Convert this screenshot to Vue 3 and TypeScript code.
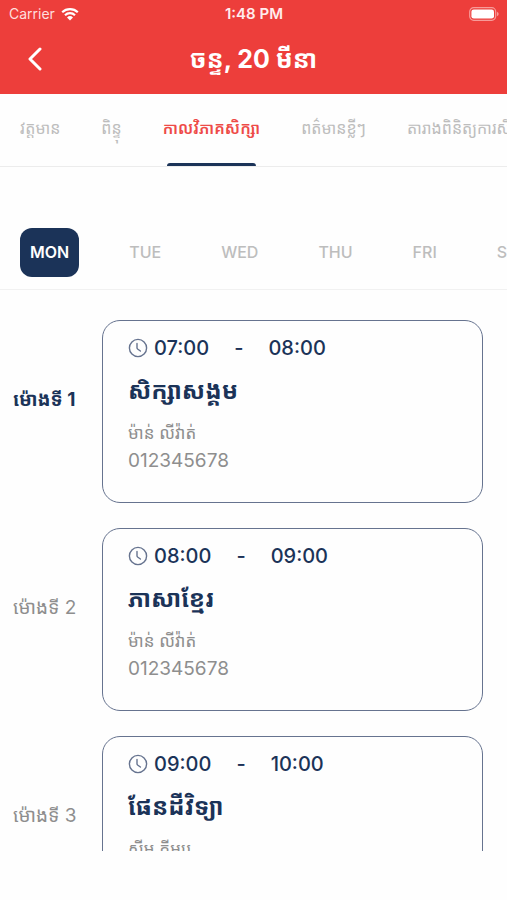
<script setup lang="ts">
import { ref } from 'vue'

interface Lesson {
  label: string
  start: string
  end: string
  subject: string
  teacher: string
  phone: string
}

const tabs: string[] = ['វត្តមាន', 'ពិន្ទុ', 'កាលវិភាគសិក្សា', 'ពត៌មានខ្លីៗ', 'តារាងពិនិត្យការសិក្សា']
const days: string[] = ['MON', 'TUE', 'WED', 'THU', 'FRI', 'SAT']
const activeTab = ref<number>(2)
const activeDay = ref<number>(0)

const lessons: Lesson[] = [
  { label: 'ម៉ោងទី 1', start: '07:00', end: '08:00', subject: 'សិក្សាសង្គម', teacher: 'ម៉ាន់ លីវ៉ាត់', phone: '012345678' },
  { label: 'ម៉ោងទី 2', start: '08:00', end: '09:00', subject: 'ភាសាខ្មែរ', teacher: 'ម៉ាន់ លីវ៉ាត់', phone: '012345678' },
  { label: 'ម៉ោងទី 3', start: '09:00', end: '10:00', subject: 'ផែនដីវិទ្យា', teacher: 'ស៊ីម គីមរេ', phone: '012345678' },
]
</script>

<template>
  <div class="screen">
    <header class="top">
      <div class="status">
        <span class="carrier">
          Carrier
          <svg class="wifi" viewBox="0 0 18 14" aria-hidden="true">
            <path d="M1.2 5.2a11.2 11.2 0 0 1 15.6 0" />
            <path d="M4 8.2a7.2 7.2 0 0 1 10 0" />
            <path class="solid" d="M9 13.4 6 10.4a4.3 4.3 0 0 1 6 0z" />
          </svg>
        </span>
        <span class="clock-text">1:48 PM</span>
        <svg class="battery" viewBox="0 0 30 14" aria-hidden="true">
          <rect class="shell" x="0.7" y="0.7" width="26" height="12.6" rx="4" />
          <rect class="charge" x="2.4" y="2.4" width="22.6" height="9.2" rx="2.4" />
          <path class="tip" d="M28 4.8q1.7.8 1.7 2.2T28 9.2z" />
        </svg>
      </div>
      <div class="title-bar">
        <button class="back" type="button" aria-label="Back">
          <svg viewBox="0 0 16 24" aria-hidden="true"><path d="M13 2 3 12l10 10" /></svg>
        </button>
        <h1>ចន្ទ, 20 មីនា</h1>
      </div>
    </header>

    <nav class="tabs">
      <button
        v-for="(tab, i) in tabs"
        :key="tab"
        type="button"
        class="tab"
        :class="{ active: i === activeTab }"
        @click="activeTab = i"
      >{{ tab }}</button>
    </nav>

    <div class="days">
      <button
        v-for="(day, i) in days"
        :key="day"
        type="button"
        class="day"
        :class="{ active: i === activeDay }"
        @click="activeDay = i"
      >{{ day }}</button>
    </div>

    <main class="lessons">
      <section v-for="(lesson, i) in lessons" :key="lesson.label" class="row">
        <div class="period" :class="{ current: i === 0 }">{{ lesson.label }}</div>
        <article class="card">
          <div class="time">
            <svg class="clock" viewBox="0 0 20 20" aria-hidden="true">
              <circle cx="10" cy="10" r="8.6" />
              <path d="M9 5.4v4.4q0 .7.6 1.2l2.8 2" />
            </svg>
            <span>{{ lesson.start }}</span>
            <span class="dash">-</span>
            <span>{{ lesson.end }}</span>
          </div>
          <h2>{{ lesson.subject }}</h2>
          <p class="teacher">{{ lesson.teacher }}</p>
          <p class="phone">{{ lesson.phone }}</p>
        </article>
      </section>
    </main>
  </div>
</template>

<style>
body {
  margin: 0;
  background: #fff;
}
</style>

<style scoped>
.screen {
  display: flex;
  flex-direction: column;
  height: 100vh;
  padding-bottom: 49px;
  box-sizing: border-box;
  overflow: hidden;
  background: #fefefe;
  color: #1b3358;
  font-family: Inter, "Noto Sans Khmer", "Khmer OS", "Noto Sans", sans-serif;
}

button {
  padding: 0;
  border: 0;
  background: none;
  font: inherit;
  color: inherit;
  white-space: nowrap;
  cursor: pointer;
}

.top {
  flex: none;
  background: #ed3e3b;
  color: #fff;
}

.status {
  display: grid;
  grid-template-columns: 1fr auto 1fr;
  align-items: center;
  height: 27px;
  padding: 0 8px 0 9px;
}

.carrier {
  display: flex;
  align-items: center;
  gap: 6px;
  font-size: 14px;
  color: #ffdedd;
}

.clock-text {
  font-size: 15px;
  font-weight: 600;
  color: #ffecec;
}

.wifi {
  width: 18px;
  height: 14px;
  fill: none;
  stroke: #fff;
  stroke-width: 2.2;
}

.wifi .solid {
  fill: #fff;
  stroke: none;
}

.battery {
  justify-self: end;
  width: 30px;
  height: 14px;
}

.shell {
  fill: none;
  stroke: #f79b99;
  stroke-width: 1.2;
}

.charge {
  fill: #fff;
}

.tip {
  fill: #f79b99;
}

.title-bar {
  display: grid;
  grid-template-columns: 44px 1fr 44px;
  align-items: center;
  height: 67px;
  padding: 0 13px 3px;
  box-sizing: border-box;
}

.back {
  display: flex;
  align-items: center;
  justify-content: center;
  height: 44px;
}

.back svg {
  width: 16px;
  height: 24px;
  fill: none;
  stroke: #fff;
  stroke-width: 3;
  stroke-linecap: round;
  stroke-linejoin: round;
}

h1 {
  margin: 0;
  text-align: center;
  font-size: 25px;
  font-weight: 700;
  line-height: 44px;
  white-space: nowrap;
}

.tabs {
  display: flex;
  flex: none;
  gap: 41px;
  height: 72px;
  padding: 0 20px;
  border-bottom: 1px solid #ececec;
  overflow: hidden;
}

.tab {
  flex: none;
  position: relative;
  padding-bottom: 4px;
  font-size: 16px;
  line-height: 24px;
  color: #bdbdbd;
}

.tab.active {
  color: #ee4b48;
  font-weight: 600;
}

.tab.active::after {
  content: "";
  position: absolute;
  right: 4px;
  bottom: 0;
  left: 4px;
  height: 3px;
  border-radius: 3px 3px 0 0;
  background: #1b3358;
}

.days {
  display: flex;
  flex: none;
  gap: 40px;
  padding: 61px 20px 12px;
  border-bottom: 1px solid #f1f1f1;
  overflow: hidden;
}

.day {
  flex: none;
  height: 49px;
  padding: 0 10px 2px;
  border-radius: 12px;
  font-size: 16px;
  font-weight: 500;
  color: #bdbdbd;
}

.day.active {
  background: #1b3358;
  color: #fff;
  font-weight: 600;
}

.lessons {
  display: flex;
  flex: 1;
  flex-direction: column;
  gap: 25px;
  min-height: 0;
  padding: 30px 24px 0 13px;
  overflow-y: auto;
  scrollbar-width: none;
}

.row {
  display: grid;
  flex: none;
  grid-template-columns: 76px 1fr;
  gap: 13px;
  align-items: center;
}

.period {
  padding-bottom: 24px;
  font-size: 19px;
  line-height: 28px;
  color: #8e8e8e;
  white-space: nowrap;
}

.period.current {
  color: #1b3358;
  font-weight: 700;
}

.card {
  height: 183px;
  padding: 13px 25px;
  box-sizing: border-box;
  border: 1px solid #66738f;
  border-radius: 18px;
}

.time {
  display: flex;
  align-items: center;
  height: 28px;
  font-size: 20px;
  font-weight: 500;
}

.clock {
  width: 20px;
  height: 20px;
  margin-right: 6px;
  fill: none;
  stroke: #66738f;
  stroke-width: 1.4;
  stroke-linecap: round;
}

.dash {
  margin: 0 25px;
}

h2 {
  margin: 8px 0;
  font-size: 24px;
  font-weight: 700;
  line-height: 42px;
}

p {
  margin: 0;
  font-size: 17px;
  line-height: 27px;
  color: #8e8e8e;
}

.phone {
  font-size: 19px;
}
</style>
